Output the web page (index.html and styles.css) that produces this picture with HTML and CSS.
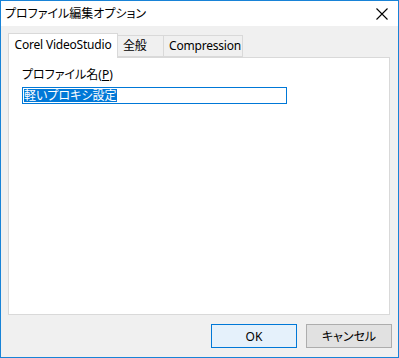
FILE: index.html
```html
<!DOCTYPE html>
<html lang="ja">
<head>
    <meta charset="UTF-8">
    <title>プロファイル編集オプション</title>
    <link rel="stylesheet" href="styles.css">
</head>
<body>
    <div class="window">
        <div class="titlebar">
            <span class="title">プロファイル編集オプション</span>
            <span class="close">
                <svg width="12" height="12" viewBox="0 0 12 12">
                    <path d="M0.5 0.5 L11.5 11.5 M11.5 0.5 L0.5 11.5" stroke="#000" stroke-width="1.1" fill="none"/>
                </svg>
            </span>
        </div>
        <div class="content">
            <div class="tabs">
                <div class="tab active tab-corel">Corel VideoStudio</div>
                <div class="tab tab-general">全般</div>
                <div class="tab tab-comp">Compression</div>
            </div>
            <div class="panel">
                <div class="field-label">プロファイル名(<u>P</u>)</div>
                <div class="textbox"><span class="selected">軽いプロキシ設定</span></div>
            </div>
            <div class="footer">
                <button class="btn btn-default">OK</button>
                <button class="btn">キャンセル</button>
            </div>
        </div>
    </div>
</body>
</html>
```

FILE: styles.css
```css
body {
    margin: 0;
    font-family: 'Noto Sans', 'Noto Sans CJK JP', sans-serif;
    font-size: 12px;
    font-feature-settings: "palt";
    color: #000;
}
.window {
    width: 399px;
    height: 358px;
    box-sizing: border-box;
    border: 1px solid #1883d7;
    background: #f0f0f0;
    display: flex;
    flex-direction: column;
}
.titlebar {
    height: 25px;
    background: #fff;
    display: flex;
    align-items: center;
    justify-content: space-between;
    padding-left: 4px;
}
.title {
    font-size: 12px;
    line-height: 16px;
}
.close {
    width: 32px;
    height: 25px;
    display: flex;
    align-items: center;
    justify-content: center;
}
.content {
    flex: 1;
    display: flex;
    flex-direction: column;
    padding: 7px 8px 0 7px;
}
.tabs {
    display: flex;
    align-items: flex-end;
    height: 24px;
    position: relative;
    z-index: 1;
}
.tab {
    box-sizing: border-box;
    height: 22px;
    border: 1px solid #d9d9d9;
    border-left: none;
    background: #f0f0f0;
    display: flex;
    align-items: center;
    line-height: 16px;
    padding: 0 0 1px 5px;
    letter-spacing: -0.2px;
    white-space: nowrap;
}
.tab.active {
    height: 25px;
    margin-bottom: -1px;
    background: #fff;
    border-left: 1px solid #d9d9d9;
    border-bottom: none;
    padding: 0 0 2px 0;
    justify-content: center;
}
.tab-corel { width: 110px; }
.tab-general { width: 46px; }
.tab-comp { width: 79px; }
.panel {
    height: 258px;
    box-sizing: border-box;
    background: #fff;
    border: 1px solid #d9d9d9;
    padding: 9px 13px 0 13px;
}
.field-label {
    line-height: 16px;
    margin-bottom: 4px;
}
.field-label u {
    text-underline-offset: 1px;
}
.textbox {
    width: 265px;
    height: 17px;
    box-sizing: border-box;
    border: 1px solid #0078d7;
    padding: 1px 1px;
    display: flex;
}
.selected {
    background: #0078d7;
    color: #fff;
    line-height: 13px;
    height: 13px;
    padding-right: 1px;
}
.footer {
    display: flex;
    justify-content: flex-end;
    gap: 9px;
    padding: 9px 0 0 0;
    margin-right: -2px;
}
.btn {
    width: 86px;
    height: 24px;
    box-sizing: border-box;
    border: 1px solid #adadad;
    background: #e1e1e1;
    font-family: 'Noto Sans', 'Noto Sans CJK JP', sans-serif;
    font-size: 12px;
    font-feature-settings: "palt";
    padding: 0;
    color: #000;
}
.btn-default {
    border-color: #0078d7;
    background: #e5f1fb;
}
```
